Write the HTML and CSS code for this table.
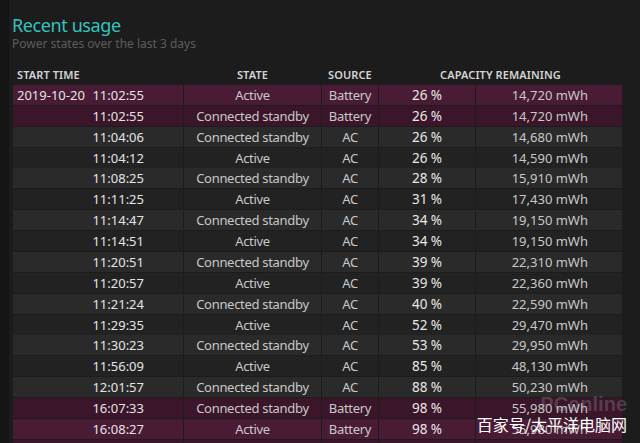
FILE: index.html
```html
<!DOCTYPE html>
<html>
<head>
<meta charset="utf-8">
<link rel="stylesheet" href="styles.css">
</head>
<body>
<div class="page">
  <h1 class="title">Recent usage</h1>
  <div class="subtitle">Power states over the last 3 days</div>
  <div class="table">
    <div class="head">
      <div class="h h-start">START TIME</div>
      <div class="h h-c">STATE</div>
      <div class="h h-c">SOURCE</div>
      <div class="h h-c h-cap">CAPACITY REMAINING</div>
    </div>
    <div class="row bat odd"><div class="c c-time"><span class="date">2019-10-20</span><span class="time">11:02:55</span></div><div class="c c-ctr">Active</div><div class="c c-ctr">Battery</div><div class="c c-pct">26 %</div><div class="c c-mwh">14,720 mWh</div></div>
    <div class="row bat even"><div class="c c-time"><span class="time">11:02:55</span></div><div class="c c-ctr">Connected standby</div><div class="c c-ctr">Battery</div><div class="c c-pct">26 %</div><div class="c c-mwh">14,720 mWh</div></div>
    <div class="row odd"><div class="c c-time"><span class="time">11:04:06</span></div><div class="c c-ctr">Connected standby</div><div class="c c-ctr">AC</div><div class="c c-pct">26 %</div><div class="c c-mwh">14,680 mWh</div></div>
    <div class="row even"><div class="c c-time"><span class="time">11:04:12</span></div><div class="c c-ctr">Active</div><div class="c c-ctr">AC</div><div class="c c-pct">26 %</div><div class="c c-mwh">14,590 mWh</div></div>
    <div class="row odd"><div class="c c-time"><span class="time">11:08:25</span></div><div class="c c-ctr">Connected standby</div><div class="c c-ctr">AC</div><div class="c c-pct">28 %</div><div class="c c-mwh">15,910 mWh</div></div>
    <div class="row even"><div class="c c-time"><span class="time">11:11:25</span></div><div class="c c-ctr">Active</div><div class="c c-ctr">AC</div><div class="c c-pct">31 %</div><div class="c c-mwh">17,430 mWh</div></div>
    <div class="row odd"><div class="c c-time"><span class="time">11:14:47</span></div><div class="c c-ctr">Connected standby</div><div class="c c-ctr">AC</div><div class="c c-pct">34 %</div><div class="c c-mwh">19,150 mWh</div></div>
    <div class="row even"><div class="c c-time"><span class="time">11:14:51</span></div><div class="c c-ctr">Active</div><div class="c c-ctr">AC</div><div class="c c-pct">34 %</div><div class="c c-mwh">19,150 mWh</div></div>
    <div class="row odd"><div class="c c-time"><span class="time">11:20:51</span></div><div class="c c-ctr">Connected standby</div><div class="c c-ctr">AC</div><div class="c c-pct">39 %</div><div class="c c-mwh">22,310 mWh</div></div>
    <div class="row even"><div class="c c-time"><span class="time">11:20:57</span></div><div class="c c-ctr">Active</div><div class="c c-ctr">AC</div><div class="c c-pct">39 %</div><div class="c c-mwh">22,360 mWh</div></div>
    <div class="row odd"><div class="c c-time"><span class="time">11:21:24</span></div><div class="c c-ctr">Connected standby</div><div class="c c-ctr">AC</div><div class="c c-pct">40 %</div><div class="c c-mwh">22,590 mWh</div></div>
    <div class="row even"><div class="c c-time"><span class="time">11:29:35</span></div><div class="c c-ctr">Active</div><div class="c c-ctr">AC</div><div class="c c-pct">52 %</div><div class="c c-mwh">29,470 mWh</div></div>
    <div class="row odd"><div class="c c-time"><span class="time">11:30:23</span></div><div class="c c-ctr">Connected standby</div><div class="c c-ctr">AC</div><div class="c c-pct">53 %</div><div class="c c-mwh">29,950 mWh</div></div>
    <div class="row even"><div class="c c-time"><span class="time">11:56:09</span></div><div class="c c-ctr">Active</div><div class="c c-ctr">AC</div><div class="c c-pct">85 %</div><div class="c c-mwh">48,130 mWh</div></div>
    <div class="row odd"><div class="c c-time"><span class="time">12:01:57</span></div><div class="c c-ctr">Connected standby</div><div class="c c-ctr">AC</div><div class="c c-pct">88 %</div><div class="c c-mwh">50,230 mWh</div></div>
    <div class="row bat even"><div class="c c-time"><span class="time">16:07:33</span></div><div class="c c-ctr">Connected standby</div><div class="c c-ctr">Battery</div><div class="c c-pct">98 %</div><div class="c c-mwh">55,980 mWh</div></div>
    <div class="row bat odd"><div class="c c-time"><span class="time">16:08:27</span></div><div class="c c-ctr">Active</div><div class="c c-ctr">Battery</div><div class="c c-pct">98 %</div><div class="c c-mwh">55,980 mWh</div></div>
    <div class="row bat even"><div class="c c-time"></div><div class="c c-ctr"></div><div class="c c-ctr"></div><div class="c c-pct"></div><div class="c c-mwh"></div></div>
  </div>
</div>
<div class="watermark">
  <span class="wm-logo">PConline</span>
  <span class="wm-text">百家号/太平洋电脑网</span>
</div>
</body>
</html>
```

FILE: styles.css
```css
html, body {
  margin: 0;
  padding: 0;
  background: #1c1c1c;
  height: 100%;
  overflow: hidden;
}
body {
  font-family: "Noto Sans", "Open Sans", sans-serif;
  color: #d0d0d0;
  border-left: 9px solid #141414;
  box-sizing: border-box;
  position: relative;
}
.page {
  padding: 14px 0 0 3px;
}
.title {
  margin: 0;
  font-size: 18px;
  font-weight: 400;
  line-height: 22px;
  letter-spacing: -0.4px;
  color: #33c4be;
}
.subtitle {
  font-size: 12px;
  line-height: 16px;
  color: #5c5c5c;
  margin-top: 0;
}
.table {
  margin-top: 13px;
  margin-left: 1px;
  display: flex;
  flex-direction: column;
  gap: 0.875px;
}
.head {
  display: grid;
  grid-template-columns: 170px 137px 56px 243px;
  column-gap: 1px;
  height: 19px;
  align-items: center;
}
.h {
  font-size: 11px;
  font-weight: 600;
  color: #d4d4d4;
  letter-spacing: 0.1px;
}
.h-start { padding-left: 4px; }
.h-c { text-align: center; }
.row {
  display: grid;
  grid-template-columns: 170px 137px 56px 96px 146px;
  column-gap: 1px;
  height: 20px;
}
.c {
  font-size: 13px;
  line-height: 20px;
  letter-spacing: -0.3px;
  white-space: nowrap;
  color: #c8c8c8;
}
.row.odd .c { background: #2a2a2a; }
.row.even .c { background: #222222; }
.row.bat.odd .c { background: #4a1b35; }
.row.bat.even .c { background: #3b1529; }
.c-time {
  display: flex;
  padding-left: 4px;
  color: #e4e4e4;
  letter-spacing: 0;
}
.date { width: 69px; }
.time {
  margin-left: auto;
  margin-right: 39px;
}
.c-ctr { text-align: center; }
.c-pct { text-align: center; color: #e8e8e8; font-size: 13.5px; letter-spacing: 0; }
.c-mwh { text-align: right; padding-right: 34px; letter-spacing: 0; }
.watermark {
  position: absolute;
  left: 466px;
  top: 393px;
  width: 152px;
  height: 42px;
}
.wm-logo {
  position: absolute;
  right: 0;
  top: 0;
  font-family: "Liberation Sans", sans-serif;
  font-size: 20px;
  line-height: 22px;
  color: rgba(200, 200, 210, 0.22);
  font-weight: 700;
}
.wm-text {
  position: absolute;
  right: 0;
  top: 21px;
  font-family: "Noto Sans CJK SC", sans-serif;
  font-size: 16px;
  line-height: 20px;
  color: #ffffff;
  white-space: nowrap;
}
```
